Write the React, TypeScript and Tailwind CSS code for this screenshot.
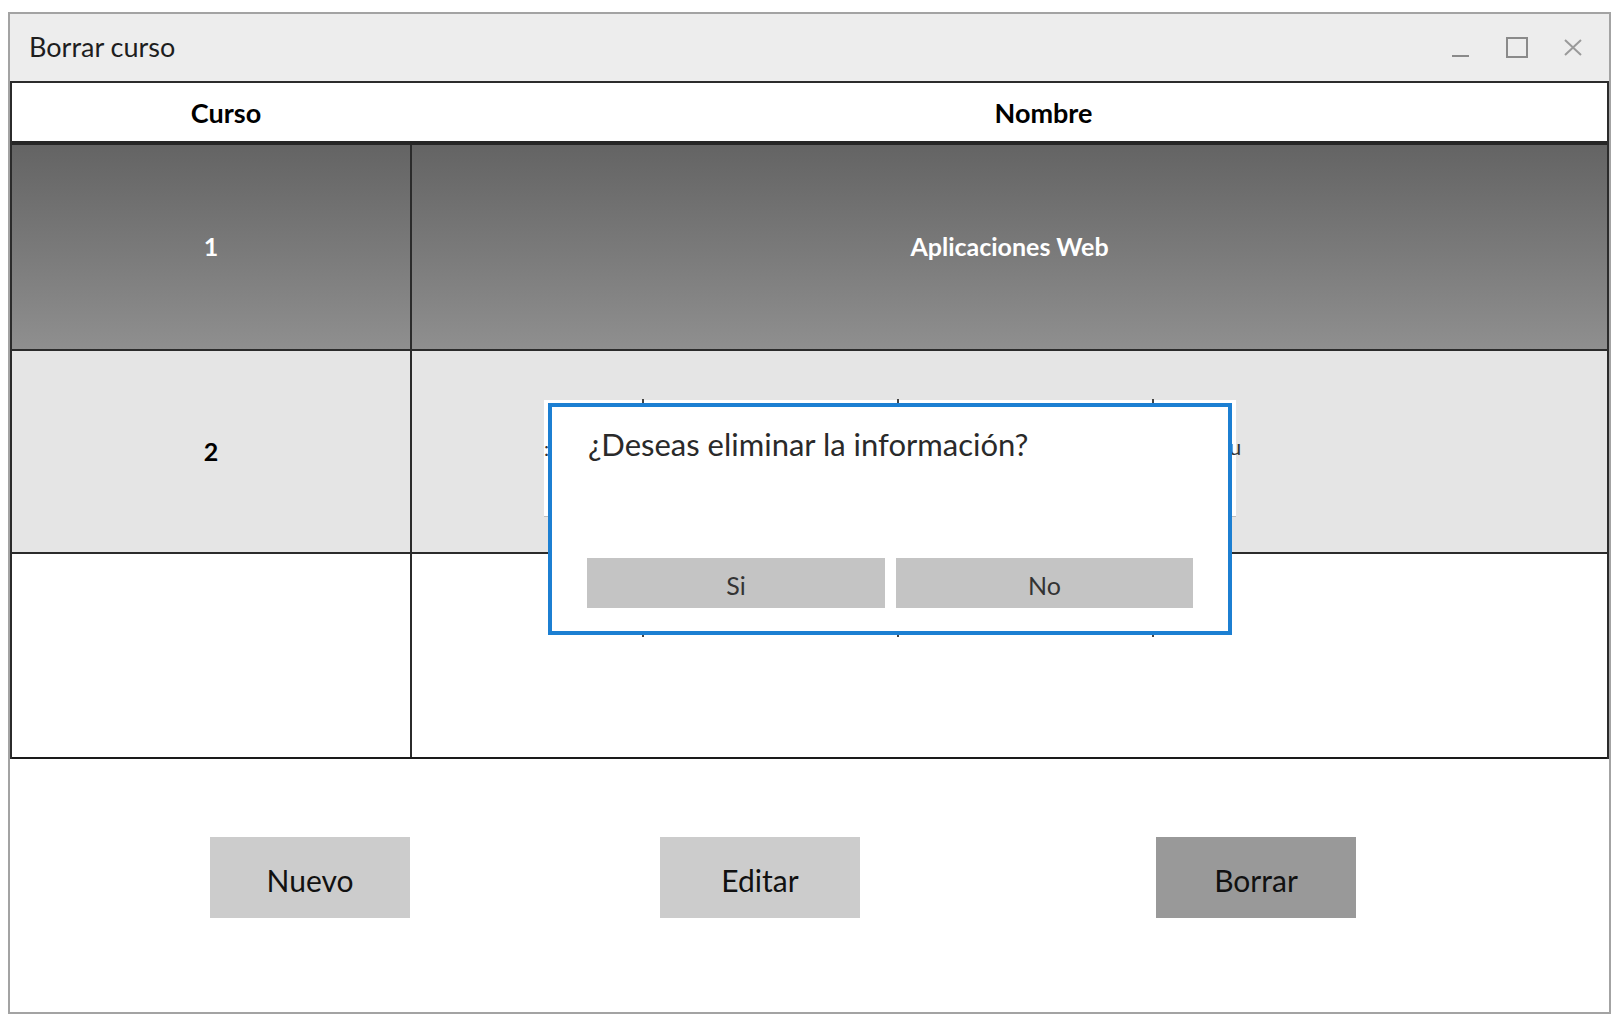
import React from 'react';

const font = { fontFamily: 'Lato, "Noto Sans", sans-serif' };

const TitleBar: React.FC = () => (
  <div className="h-[67px] bg-[#ededed] flex items-center pl-[19px]">
    <span className="text-[27px] text-[#1e1e1e]">Borrar curso</span>
    <div className="ml-auto flex items-center h-full">
      <div className="w-[17px] h-[2px] bg-[#8a8a8a] mt-[17px]" />
      <div className="ml-[37px] w-[22px] h-[21px] border-2 border-[#8a8a8a]" />
      <svg className="ml-[36px] mr-[27px]" width="18" height="17" viewBox="0 0 18 17">
        <path d="M1 1L17 16M17 1L1 16" stroke="#9a9a9a" strokeWidth="2" fill="none" />
      </svg>
    </div>
  </div>
);

const Dialog: React.FC = () => (
  <>
    {/* control hidden behind the dialog */}
    <div className="absolute left-[544px] top-[400px] w-[692px] h-[117px] bg-white border-b border-[#bdbdbd]" />
    <div className="absolute left-[544px] top-[438px] text-[20px] leading-none text-[#333]">:</div>
    <div className="absolute left-[1229px] top-[436px] text-[22px] leading-none text-[#333]">u</div>
    <div className="absolute left-[642px] top-[399px] w-[2px] h-[5px] bg-[#444]" />
    <div className="absolute left-[897px] top-[399px] w-[2px] h-[5px] bg-[#444]" />
    <div className="absolute left-[1152px] top-[399px] w-[2px] h-[5px] bg-[#444]" />
    <div className="absolute left-[642px] top-[633px] w-[2px] h-[4px] bg-[#444]" />
    <div className="absolute left-[897px] top-[633px] w-[2px] h-[4px] bg-[#444]" />
    <div className="absolute left-[1152px] top-[633px] w-[2px] h-[4px] bg-[#444]" />

    <div className="absolute left-[548px] top-[403px] w-[684px] h-[232px] bg-white border-4 border-[#1c7fd2] flex flex-col px-[35px] pb-[23px]">
      <div className="pt-[17px] pl-[1px] text-[31px] leading-[40px] text-[#2a2a2a]">
        ¿Deseas eliminar la información?
      </div>
      <div className="mt-auto flex gap-[11px]">
        <button className="w-[298px] h-[50px] bg-[#c4c4c4] text-[25px] text-[#333] pt-[6px]">Si</button>
        <button className="w-[297px] h-[50px] bg-[#c4c4c4] text-[25px] text-[#333] pt-[6px]">No</button>
      </div>
    </div>
  </>
);

const App: React.FC = () => {
  return (
    <div className="w-[1620px] h-[1020px] bg-white relative" style={font}>
      <div className="absolute left-[8px] top-[12px] w-[1603px] h-[1002px] border-2 border-[#a3a3a3] flex flex-col">
        <TitleBar />

        <div className="border-2 border-[#2b2b2b] border-b-0">
          <div className="h-[62px] flex items-center bg-white border-b-4 border-[#262626] text-[27px] font-bold text-black">
            <div className="w-[428px] text-center pt-[2px]">Curso</div>
            <div className="flex-1 text-center pl-[40px] pt-[2px]">Nombre</div>
          </div>

          <div className="h-[206px] flex border-b-2 border-[#2b2b2b] bg-gradient-to-b from-[#646464] to-[#8f8f8f] text-white font-bold text-[25px]">
            <div className="w-[400px] flex items-center justify-center border-r-2 border-[#2b2b2b]">1</div>
            <div className="flex-1 flex items-center justify-center">Aplicaciones Web</div>
          </div>

          <div className="h-[203px] flex border-b-2 border-[#2b2b2b] bg-[#e5e5e5] text-black font-bold text-[25px]">
            <div className="w-[400px] flex items-center justify-center border-r-2 border-[#2b2b2b]">2</div>
            <div className="flex-1" />
          </div>

          <div className="h-[205px] flex border-b-2 border-[#1a1a1a] bg-white">
            <div className="w-[400px] border-r-2 border-[#2b2b2b]" />
            <div className="flex-1" />
          </div>
        </div>

        <div className="flex pt-[78px] pl-[200px] text-[30px] text-[#111]">
          <button className="w-[200px] h-[81px] bg-[#cccccc] pt-[6px]">Nuevo</button>
          <button className="ml-[250px] w-[200px] h-[81px] bg-[#cccccc] pt-[6px]">Editar</button>
          <button className="ml-[296px] w-[200px] h-[81px] bg-[#999999] pt-[6px]">Borrar</button>
        </div>
      </div>

      <Dialog />
    </div>
  );
};

export default App;
